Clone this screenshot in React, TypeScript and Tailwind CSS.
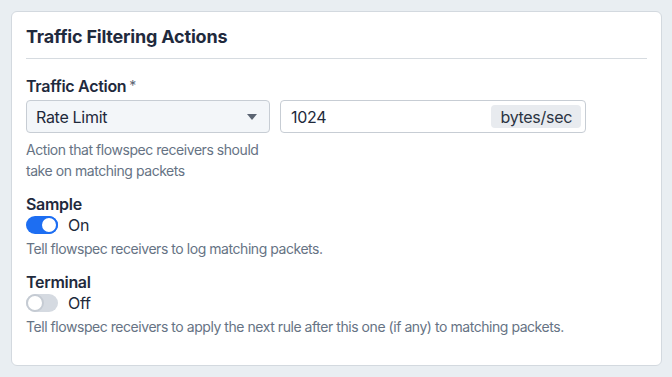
import { useState } from "react";

function Toggle({ on, label }: { on: boolean; label: string }) {
  return (
    <div className="flex items-center gap-[10px] h-[22px]">
      <span
        className={
          on
            ? "relative flex items-center w-[32px] h-[18px] rounded-full bg-[#1d6ef2]"
            : "relative flex items-center w-[32px] h-[18px] rounded-full bg-[#d5dae1]"
        }
      >
        <span
          className={
            on
              ? "absolute right-0 w-[18px] h-[18px] rounded-full bg-white border-2 border-[#1d6ef2]"
              : "absolute left-0 w-[18px] h-[18px] rounded-full bg-white border-2 border-[#c5cbd3]"
          }
        />
      </span>
      <span className="text-[16px] tracking-[-0.3px] text-[#1e293b]">{label}</span>
    </div>
  );
}

export default function App() {
  const [rate] = useState("1024");

  return (
    <div
      className="w-[672px] h-[377px] bg-[#e9eef2] pt-[11px] pl-[11px]"
      style={{ fontFamily: "Inter, 'Noto Sans', sans-serif" }}
    >
      <div className="w-[651px] h-[355px] bg-white border border-[#d3d9df] rounded-[6px] px-[14px] pt-[13px]">
        <h2 className="text-[18px] leading-[24px] font-bold text-[#1f2a3d] tracking-[-0.2px]">
          Traffic Filtering Actions
        </h2>
        <div className="mt-[9px] border-t border-[#d6dbe0] w-[621px]" />

        <div className="mt-[15px]">
          <p className="text-[16px] leading-[24px] font-semibold tracking-[-0.3px] text-[#1f2a3d]">
            Traffic Action<span className="text-[#5b6472] font-normal text-[14px] ml-[3px] align-top">*</span>
          </p>
          <div className="flex gap-[10px] mt-[2px]">
            <div className="w-[244px]">
              <div className="h-[33px] flex items-center justify-between px-[9px] bg-[#f3f6f9] border border-[#c7cdd4] rounded-[4px]">
                <span className="text-[16px] tracking-[-0.3px] text-[#1e293b]">Rate Limit</span>
                <svg width="12" height="8" viewBox="0 0 12 8" className="mr-[2px]">
                  <path d="M1 1h10L6 7z" fill="#5b6472" />
                </svg>
              </div>
              <p className="mt-[6px] text-[14px] leading-[21px] tracking-[-0.45px] text-[#667384]">
                Action that flowspec receivers should take on matching packets
              </p>
            </div>
            <div className="w-[306px] h-[33px] flex items-center justify-between pl-[10px] pr-[4px] bg-white border border-[#c7cdd4] rounded-[4px]">
              <span className="text-[16px] tracking-[-0.3px] text-[#1e293b]">{rate}</span>
              <span className="h-[23px] px-[9px] flex items-center rounded-[4px] bg-[#e8ebef] text-[16px] tracking-[-0.3px] text-[#2b3442]">
                bytes/sec
              </span>
            </div>
          </div>
        </div>

        <div className="mt-[13px]">
          <p className="text-[16px] leading-[20px] font-semibold tracking-[-0.3px] text-[#1f2a3d]">Sample</p>
          <Toggle on label="On" />
          <p className="mt-[2px] text-[14px] leading-[21px] tracking-[-0.45px] text-[#667384]">
            Tell flowspec receivers to log matching packets.
          </p>
        </div>

        <div className="mt-[13px]">
          <p className="text-[16px] leading-[20px] font-semibold tracking-[-0.3px] text-[#1f2a3d]">Terminal</p>
          <Toggle on={false} label="Off" />
          <p className="mt-[2px] text-[14px] leading-[21px] tracking-[-0.45px] text-[#667384]">
            Tell flowspec receivers to apply the next rule after this one (if any) to matching packets.
          </p>
        </div>
      </div>
    </div>
  );
}
